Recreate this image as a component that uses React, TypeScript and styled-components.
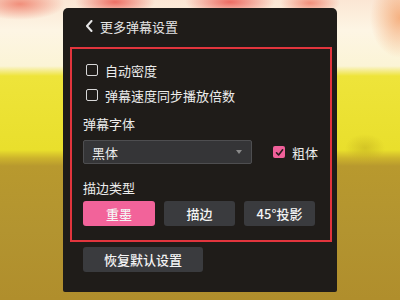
import React from "react";
import styled, { createGlobalStyle } from "styled-components";

const Global = createGlobalStyle`
  html, body { margin: 0; padding: 0; }
  body { font-family: "Noto Sans CJK SC", "Noto Sans", sans-serif; }
`;

const Stage = styled.div`
  width: 400px;
  height: 300px;
  overflow: hidden;
  padding: 8px 0 0 63px;
  box-sizing: border-box;
  background:
    radial-gradient(ellipse 45px 16px at 20px 4px, rgba(238,120,100,0.8), rgba(238,120,100,0) 100%),
    radial-gradient(ellipse 40px 14px at 115px 2px, rgba(236,105,95,0.95), rgba(236,105,95,0) 100%),
    radial-gradient(ellipse 45px 14px at 230px 2px, rgba(236,100,92,0.95), rgba(236,100,92,0) 100%),
    radial-gradient(ellipse 30px 12px at 310px 3px, rgba(240,120,100,0.8), rgba(240,120,100,0) 100%),
    radial-gradient(ellipse 30px 40px at 400px 18px, rgba(242,150,90,0.7), rgba(242,150,90,0) 100%),
    radial-gradient(ellipse 20px 14px at 365px 148px, rgba(190,170,30,0.5), rgba(190,170,30,0) 100%),
    linear-gradient(180deg,
      #fbe6d4 0px, #fdf5e4 30px, #fbf4d6 66px, #eee43a 76px,
      #e9df2c 150px, #cdb42c 158px, #b8992e 166px, #b39430 230px, #b08e2c 300px);
`;

const Panel = styled.div`
  width: 274px;
  height: 284px;
  background: #1f1c19;
  border-radius: 5px 5px 2px 2px;
  display: flex;
  flex-direction: column;
`;

const Header = styled.div`
  height: 36px;
  display: flex;
  align-items: center;
  gap: 7px;
  padding-left: 22px;
  color: #e4e4e4;
  font-size: 13px;
`;

const Highlight = styled.div`
  margin: 3px 0 0 7px;
  width: 262px;
  height: 195px;
  box-sizing: border-box;
  border: 2px solid #e2353d;
  padding: 11px 0 0 11px;
  display: flex;
  flex-direction: column;
`;

const CheckRow = styled.label<{ $gap?: number }>`
  display: flex;
  align-items: center;
  height: 20px;
  margin-top: ${(p) => p.$gap ?? 0}px;
  gap: 7px;
  padding-left: 3px;
  color: #ececec;
  font-size: 13px;
`;

const Box = styled.span<{ $checked?: boolean }>`
  width: 12px;
  height: 12px;
  box-sizing: border-box;
  border-radius: 2px;
  border: ${(p) => (p.$checked ? "none" : "1.5px solid #d8d8d8")};
  background: ${(p) => (p.$checked ? "#f0609a" : "transparent")};
  display: flex;
  align-items: center;
  justify-content: center;
`;

const Label = styled.div<{ $gap: number }>`
  height: 20px;
  line-height: 20px;
  margin-top: ${(p) => p.$gap}px;
  color: #ececec;
  font-size: 13px;
`;

const FontRow = styled.div`
  display: flex;
  align-items: center;
  margin-top: 6px;
  gap: 18px;
`;

const Select = styled.div`
  width: 169px;
  height: 24px;
  box-sizing: border-box;
  border: 1px solid #4e4e50;
  border-radius: 2px;
  background: #353537;
  display: flex;
  align-items: center;
  justify-content: space-between;
  padding: 0 9px 0 8px;
  color: #ececec;
  font-size: 13px;
`;

const Arrow = styled.span`
  width: 0;
  height: 0;
  border-left: 3px solid transparent;
  border-right: 3px solid transparent;
  border-top: 4px solid #8a8a8a;
`;

const ButtonRow = styled.div`
  display: flex;
  gap: 9px;
  margin-top: 3px;
`;

const Btn = styled.div<{ $active?: boolean; $w?: number }>`
  width: ${(p) => p.$w ?? 71}px;
  height: 25px;
  border-radius: 3px;
  background: ${(p) => (p.$active ? "#f2639a" : "#3a3b3e")};
  color: #f4f4f4;
  font-size: 13px;
  font-weight: 500;
  display: flex;
  align-items: center;
  justify-content: center;
`;

const ResetBtn = styled(Btn)`
  margin: 5px 0 0 20px;
`;

const Check = () => (
  <svg width="9" height="9" viewBox="0 0 9 9">
    <path d="M1.5 4.8 L3.6 7 L7.6 1.8" fill="none" stroke="#2a1a1e" strokeWidth="1.6" strokeLinecap="round" strokeLinejoin="round" />
  </svg>
);

const Chevron = () => (
  <svg width="8" height="12" viewBox="0 0 8 12">
    <path d="M6.5 1 L2 6 L6.5 11" fill="none" stroke="#e6e6e6" strokeWidth="2" strokeLinecap="round" strokeLinejoin="round" />
  </svg>
);

export default function App() {
  return (
    <>
      <Global />
      <Stage>
        <Panel>
          <Header>
            <Chevron />
            <span>更多弹幕设置</span>
          </Header>
          <Highlight>
            <CheckRow>
              <Box />
              自动密度
            </CheckRow>
            <CheckRow $gap={5}>
              <Box />
              弹幕速度同步播放倍数
            </CheckRow>
            <Label $gap={9}>弹幕字体</Label>
            <FontRow>
              <Select>
                <span>黑体</span>
                <Arrow />
              </Select>
              <CheckRow>
                <Box $checked>
                  <Check />
                </Box>
                粗体
              </CheckRow>
            </FontRow>
            <Label $gap={14}>描边类型</Label>
            <ButtonRow>
              <Btn $active $w={72}>重墨</Btn>
              <Btn>描边</Btn>
              <Btn>45°投影</Btn>
            </ButtonRow>
          </Highlight>
          <ResetBtn $w={120}>恢复默认设置</ResetBtn>
        </Panel>
      </Stage>
    </>
  );
}
